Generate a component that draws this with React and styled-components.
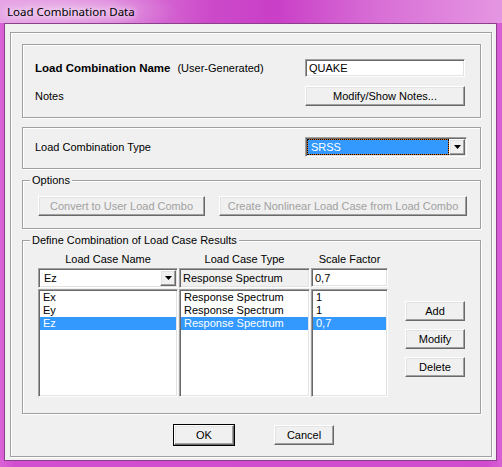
import React from "react";
import styled, { createGlobalStyle, css } from "styled-components";

const GlobalStyle = createGlobalStyle`
  html, body {
    margin: 0;
    padding: 0;
  }
  body {
    width: 502px;
    height: 467px;
    overflow: hidden;
    font-family: "Liberation Sans", Arial, sans-serif;
    font-size: 11px;
    color: #000;
  }
  * {
    box-sizing: border-box;
  }
`;

const etched = css`
  border: 1px solid #a0a0a0;
  box-shadow: inset 1px 1px 0 #fff, 1px 1px 0 #fff;
`;

const sunken = css`
  border: 1px solid;
  border-color: #a0a0a0 #fff #fff #a0a0a0;
  box-shadow: inset 1px 1px 0 #696969, inset -1px -1px 0 #e3e3e3;
`;

const raised = css`
  background: #f0f0f0;
  border: 1px solid;
  border-color: #fff #696969 #696969 #fff;
  box-shadow: inset -1px -1px 0 #a0a0a0, inset 1px 1px 0 #e3e3e3;
`;

const Window = styled.div`
  width: 502px;
  height: 467px;
  display: flex;
  flex-direction: column;
  padding: 0 5px 6px 4px;
  background: linear-gradient(90deg, #d963d7 0%, #d24ed0 3%, #d04ccf 97%, #d860d6 100%);
`;

const TitleBar = styled.div`
  height: 23px;
  margin: 0 -5px 0 -4px;
  padding-left: 7px;
  display: flex;
  align-items: center;
  background:
    radial-gradient(ellipse 110px 22px at 70px 11px, rgba(255, 255, 255, 0.35), rgba(255, 255, 255, 0) 100%),
    linear-gradient(90deg, #e49ce3 0%, #dc80da 22%, #cc4aca 42%, #c93fc7 55%, #d86ed6 75%, #e596e2 100%);
  & > span {
    font-family: "Noto Sans", "Open Sans", sans-serif;
    font-size: 11.5px;
    color: #000;
    text-shadow: 0 0 6px #fff, 0 0 10px rgba(255, 255, 255, 0.8);
  }
`;

const Client = styled.div`
  flex: 1;
  border: 1px solid #8c3f8a;
  background: #f0f0f0;
  padding: 8px 0 0 5px;
`;

const OuterFrame = styled.div`
  width: 482px;
  height: 425px;
  padding: 11px 0 0 11px;
  display: flex;
  flex-direction: column;
  ${etched}
`;

const Group = styled.div`
  position: relative;
  width: 459px;
  height: ${(p) => p.$h}px;
  margin-top: ${(p) => p.$mt || 0}px;
  ${etched}
`;

const Legend = styled.span`
  position: absolute;
  top: -7px;
  left: 7px;
  padding: 0 2px;
  line-height: 13px;
  background: #f0f0f0;
`;

const NameGrid = styled.div`
  display: grid;
  grid-template-columns: 1fr 160px;
  grid-template-rows: 18px 20px;
  row-gap: 9px;
  align-items: center;
  padding: 14px 15px 0 12px;
`;

const Label = styled.div`
  display: flex;
  align-items: center;
  gap: 7px;
  & > b {
    font-family: "Liberation Sans", Arial, sans-serif;
    font-size: 11.5px;
  }
`;

const TypeRow = styled.div`
  display: flex;
  align-items: center;
  justify-content: space-between;
  padding: 9px 13px 0 12px;
`;

const OptionsRow = styled.div`
  display: flex;
  gap: 14px;
  padding: 15px 0 0 15px;
`;

const TextBox = styled.div`
  height: ${(p) => p.$h || 18}px;
  display: flex;
  align-items: center;
  padding-left: 3px;
  background: ${(p) => (p.$readonly ? "#f0f0f0" : "#fff")};
  ${sunken}
`;

const Button = styled.button`
  width: ${(p) => p.$w}px;
  height: 20px;
  padding: 0;
  font-family: "Liberation Sans", Arial, sans-serif;
  font-size: 11px;
  color: ${(p) => (p.disabled ? "#a0a0a0" : "#000")};
  cursor: default;
  ${raised}
  ${(p) =>
    p.$default &&
    css`
      outline: 1px solid #000;
      outline-offset: 0;
    `}
`;

const Combo = styled.div`
  width: ${(p) => p.$w}px;
  height: 20px;
  display: flex;
  padding: 1px;
  background: #fff;
  ${sunken}
`;

const ComboValue = styled.div`
  flex: 1;
  display: flex;
  align-items: center;
  padding-left: ${(p) => (p.$selected ? 3 : 4)}px;
  ${(p) =>
    p.$selected &&
    css`
      background: #3399ff;
      color: #fff;
      border: 1px solid #d26a12;
      outline: 1px dotted #000;
      outline-offset: -1px;
    `}
`;

const ComboArrow = styled.div`
  width: 16px;
  display: flex;
  align-items: center;
  justify-content: center;
  ${raised}
`;

const ResultsBody = styled.div`
  display: flex;
  padding: 10px 0 0 15px;
`;

const CaseGrid = styled.div`
  display: grid;
  grid-template-columns: 140px 131px 77px;
  grid-template-rows: 17px 20px 109px;
  column-gap: 1px;
`;

const ColHead = styled.div`
  text-align: center;
  line-height: 17px;
`;

const List = styled.div`
  margin-top: 1px;
  height: 108px;
  padding: 1px;
  background: #fff;
  ${sunken}
`;

const ListRow = styled.div`
  height: 13px;
  line-height: 13px;
  padding-left: 3px;
  white-space: nowrap;
  overflow: hidden;
  ${(p) =>
    p.$selected &&
    css`
      background: #3399ff;
      color: #fff;
    `}
`;

const SideButtons = styled.div`
  display: flex;
  flex-direction: column;
  gap: 8px;
  margin: 50px 0 0 17px;
`;

const BottomRow = styled.div`
  display: flex;
  gap: 40px;
  margin-top: 11px;
  padding-left: 152px;
`;

function Arrow() {
  return (
    <svg width="7" height="4" viewBox="0 0 7 4">
      <polygon points="0,0 7,0 3.5,4" fill="#000" />
    </svg>
  );
}

const rows = [
  { name: "Ex", type: "Response Spectrum", sf: "1" },
  { name: "Ey", type: "Response Spectrum", sf: "1" },
  { name: "Ez", type: "Response Spectrum", sf: "0,7", selected: true },
];

export default function App() {
  return (
    <>
      <GlobalStyle />
      <Window>
        <TitleBar>
          <span>Load Combination Data</span>
        </TitleBar>
        <Client>
          <OuterFrame>
            <Group $h={74}>
              <NameGrid>
                <Label>
                  <b>Load Combination Name</b>
                  <span>(User-Generated)</span>
                </Label>
                <TextBox>QUAKE</TextBox>
                <Label>Notes</Label>
                <Button $w={160}>Modify/Show Notes...</Button>
              </NameGrid>
            </Group>

            <Group $h={42} $mt={9}>
              <TypeRow>
                <Label>Load Combination Type</Label>
                <Combo $w={162}>
                  <ComboValue $selected>SRSS</ComboValue>
                  <ComboArrow>
                    <Arrow />
                  </ComboArrow>
                </Combo>
              </TypeRow>
            </Group>

            <Group $h={49} $mt={11}>
              <Legend>Options</Legend>
              <OptionsRow>
                <Button $w={167} disabled>
                  Convert to User Load Combo
                </Button>
                <Button $w={248} disabled>
                  Create Nonlinear Load Case from Load Combo
                </Button>
              </OptionsRow>
            </Group>

            <Group $h={174} $mt={11}>
              <Legend>Define Combination of Load Case Results</Legend>
              <ResultsBody>
                <CaseGrid>
                  <ColHead>Load Case Name</ColHead>
                  <ColHead>Load Case Type</ColHead>
                  <ColHead>Scale Factor</ColHead>
                  <Combo $w={140}>
                    <ComboValue>Ez</ComboValue>
                    <ComboArrow>
                      <Arrow />
                    </ComboArrow>
                  </Combo>
                  <TextBox $h={20} $readonly>
                    Response Spectrum
                  </TextBox>
                  <TextBox $h={19}>0,7</TextBox>
                  <List>
                    {rows.map((r) => (
                      <ListRow key={r.name} $selected={r.selected}>
                        {r.name}
                      </ListRow>
                    ))}
                  </List>
                  <List>
                    {rows.map((r) => (
                      <ListRow key={r.name} $selected={r.selected}>
                        {r.type}
                      </ListRow>
                    ))}
                  </List>
                  <List>
                    {rows.map((r) => (
                      <ListRow key={r.name} $selected={r.selected}>
                        {r.sf}
                      </ListRow>
                    ))}
                  </List>
                </CaseGrid>
                <SideButtons>
                  <Button $w={60}>Add</Button>
                  <Button $w={60}>Modify</Button>
                  <Button $w={60}>Delete</Button>
                </SideButtons>
              </ResultsBody>
            </Group>

            <BottomRow>
              <Button $w={60} $default>
                OK
              </Button>
              <Button $w={60}>Cancel</Button>
            </BottomRow>
          </OuterFrame>
        </Client>
      </Window>
    </>
  );
}
